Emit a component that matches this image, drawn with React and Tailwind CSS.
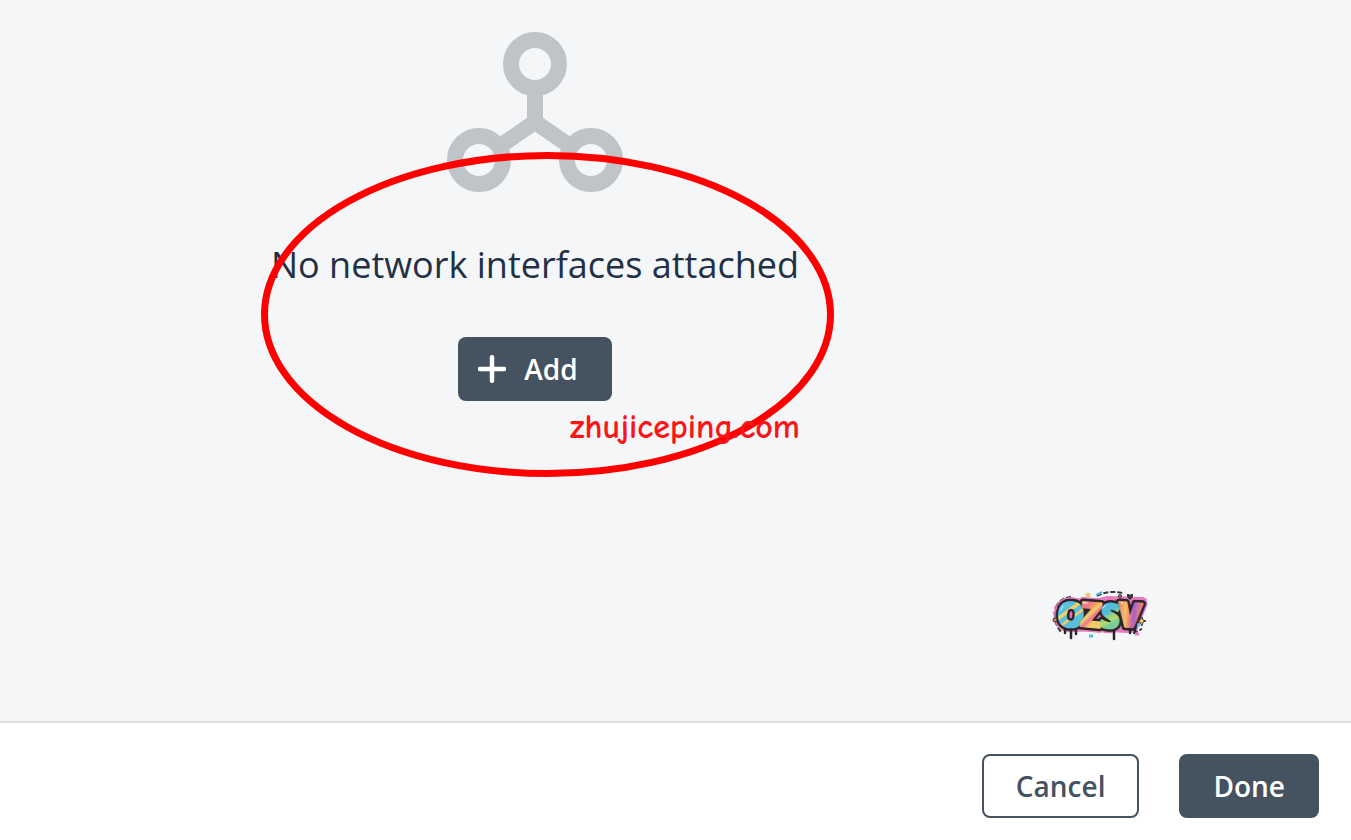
function NetworkIcon() {
  return (
    <svg
      viewBox="0 0 176 160"
      className="w-44 h-40"
      fill="none"
      stroke="#c0c3c8"
      strokeWidth="16"
      aria-hidden="true"
    >
      <circle cx="88" cy="32" r="24" />
      <circle cx="32" cy="128" r="24" />
      <circle cx="144" cy="128" r="24" />
      <path d="M88 56v34M51 115.500l37-25.500 37 25.500" />
    </svg>
  );
}

function PlusIcon() {
  return (
    <svg
      viewBox="0 0 28 28"
      className="w-7 h-7"
      fill="none"
      stroke="currentColor"
      strokeWidth="4.500"
      strokeLinecap="round"
      aria-hidden="true"
    >
      <path d="M14 2.200v23.600M2 14h24" />
    </svg>
  );
}

const letters = [
  { char: "O", fill: "url(#fillO)", place: "translate(25 42) rotate(4)" },
  { char: "Z", fill: "url(#fillZ)", place: "translate(45 42) rotate(5)" },
  { char: "S", fill: "url(#fillS)", place: "translate(64 43) rotate(6)" },
  { char: "V", fill: "url(#fillV)", place: "translate(84 42) rotate(4)" },
];

// each pass is drawn over the one before: pink halo, black edge, colour
const passes = [
  { name: "halo", color: "#e67bbd", width: 10 },
  { name: "edge", color: "#2b2529", width: 7 },
  { name: "face", color: null, width: 2 },
];

function GraffitiLogo() {
  return (
    <svg viewBox="0 0 110 62" className="w-[110px] h-[62px]" role="img" aria-label="OZSV">
      <defs>
        <linearGradient id="fillO" x1="0" y1="0" x2="0.5" y2="1">
          <stop offset="0.46" stopColor="#59bfdc" />
          <stop offset="0.48" stopColor="#f3d16c" />
          <stop offset="0.54" stopColor="#f3d16c" />
          <stop offset="0.56" stopColor="#59bfdc" />
          <stop offset="0.64" stopColor="#59bfdc" />
          <stop offset="0.66" stopColor="#efc96d" />
          <stop offset="0.7" stopColor="#efc96d" />
          <stop offset="0.72" stopColor="#59bfdc" />
        </linearGradient>
        <linearGradient id="fillZ" x1="0" y1="0" x2="0.5" y2="1">
          <stop offset="0.2" stopColor="#f3a85f" />
          <stop offset="0.36" stopColor="#ef6f8f" />
          <stop offset="0.5" stopColor="#f5a060" />
          <stop offset="0.58" stopColor="#f1d16a" />
          <stop offset="0.68" stopColor="#ee7394" />
          <stop offset="0.78" stopColor="#f1c968" />
        </linearGradient>
        <linearGradient id="fillS" x1="0" y1="0" x2="0.3" y2="1">
          <stop offset="0.52" stopColor="#55bcd8" />
          <stop offset="0.6" stopColor="#8bd08a" />
          <stop offset="0.7" stopColor="#b5dc6a" />
          <stop offset="0.8" stopColor="#7acb9a" />
        </linearGradient>
        <linearGradient id="fillV" x1="0" y1="0" x2="1" y2="0">
          <stop offset="0" stopColor="#f1836d" />
          <stop offset="0.3" stopColor="#f5c061" />
          <stop offset="0.5" stopColor="#ef7886" />
          <stop offset="0.65" stopColor="#a863c4" />
          <stop offset="1" stopColor="#ef8a78" />
        </linearGradient>
      </defs>

      <g fill="none" stroke="#38363a" strokeWidth="2" strokeDasharray="5 2">
        <path d="M11 22q4-9 15-10M10 29q-1 10 7 19M52 11q10-6 26-3M88 48l9-4" />
      </g>
      <path d="M17 15l24-2 5 2 16-4 36 1 4 2-11 33-10 1-28-2-26 1-10-6z" fill="#e67bbd" />
      {passes.map((pass) => (
        <g
          key={pass.name}
          strokeWidth={pass.width}
          strokeLinejoin="round"
          textAnchor="middle"
          className="text-[34px] font-extrabold font-['Open_Sans',sans-serif]"
        >
          {letters.map((l) => (
            <text
              key={l.char}
              transform={l.place}
              fill={pass.color || l.fill}
              stroke={pass.color || l.fill}
            >
              {l.char}
            </text>
          ))}
        </g>
      ))}

      <g fill="none" stroke="#fff" strokeWidth="1" strokeLinecap="round" opacity="0.8">
        <path d="M16 25l2-4M38 18h5M58 23l3-3M76 18h2" />
      </g>
      <g fill="none" stroke="#2b2529" strokeWidth="2.500" strokeLinecap="round">
        <path d="M26 45v8M20 44v4M31 46v3M69 46v8M85 44v4M90 43v5" />
      </g>
      <path d="M82 9h2l1 1 1-1h2v3l-3 3-3-3z" fill="#38363a" />
      <path d="M97 32l1 3 3 1-3 1-1 4-2-4-3-1 3-1z" fill="#f3cf54" stroke="#38363a" />
      <circle cx="43" cy="10" r="2.500" fill="#f2c572" />
      <circle cx="75" cy="11" r="1.500" fill="#e77a75" stroke="#38363a" />
      <circle cx="10" cy="35" r="2" fill="#e77a75" stroke="#38363a" />
      <path d="M51 10l6-3" stroke="#59bfdc" strokeWidth="2" />
      <path d="M9 23h3M90 49h4M8 28h2" stroke="#e67bbd" strokeWidth="3" />
      <path d="M44 51h4M92 40h3" stroke="#59bfdc" strokeWidth="3" />
    </svg>
  );
}

function Annotation() {
  return (
    <div className="absolute left-1/2 top-[120px] -ml-[274px] w-[573px] h-[325px] pointer-events-none">
      <svg viewBox="0 0 573 325" className="w-full h-full" aria-hidden="true">
        <ellipse
          cx="286.500"
          cy="162.500"
          rx="283"
          ry="159"
          fill="none"
          stroke="#fe0000"
          strokeWidth="7"
        />
      </svg>
      <span className="absolute left-[309px] top-[255px] text-[34px] leading-10 font-bold text-[#fb1418] font-['Comic_Sans_MS','Comic_Neue','Open_Sans',sans-serif]">
        zhujiceping.com
      </span>
    </div>
  );
}

export default function App() {
  return (
    <div className="min-h-screen flex flex-col bg-[#f4f6f8] font-['Open_Sans',sans-serif]">
      <main className="relative grow pt-8 pr-[281px]">
        <section className="relative flex flex-col items-center">
          <NetworkIcon />
          <h2 className="mt-12 text-[36px] leading-[49px] text-[#233044]">
            No network interfaces attached
          </h2>
          <button
            type="button"
            className="mt-12 h-16 pl-5 pr-[34px] flex items-center gap-[18px] rounded-lg bg-[#45525f] text-white text-[28px] font-semibold"
          >
            <PlusIcon />
            Add
          </button>
          <Annotation />
        </section>
        <div className="absolute right-[196px] bottom-[74px]">
          <GraffitiLogo />
        </div>
      </main>

      <footer className="flex justify-end gap-10 border-t-2 border-[#d9dde1] bg-white pt-[31px] pb-[22px] px-8">
        <button
          type="button"
          className="h-16 px-8 rounded-lg border-2 border-[#45525f] bg-white text-[#45525f] text-[28px] font-semibold"
        >
          Cancel
        </button>
        <button
          type="button"
          className="h-16 px-[34px] rounded-lg bg-[#45525f] text-white text-[28px] font-semibold"
        >
          Done
        </button>
      </footer>
    </div>
  );
}
